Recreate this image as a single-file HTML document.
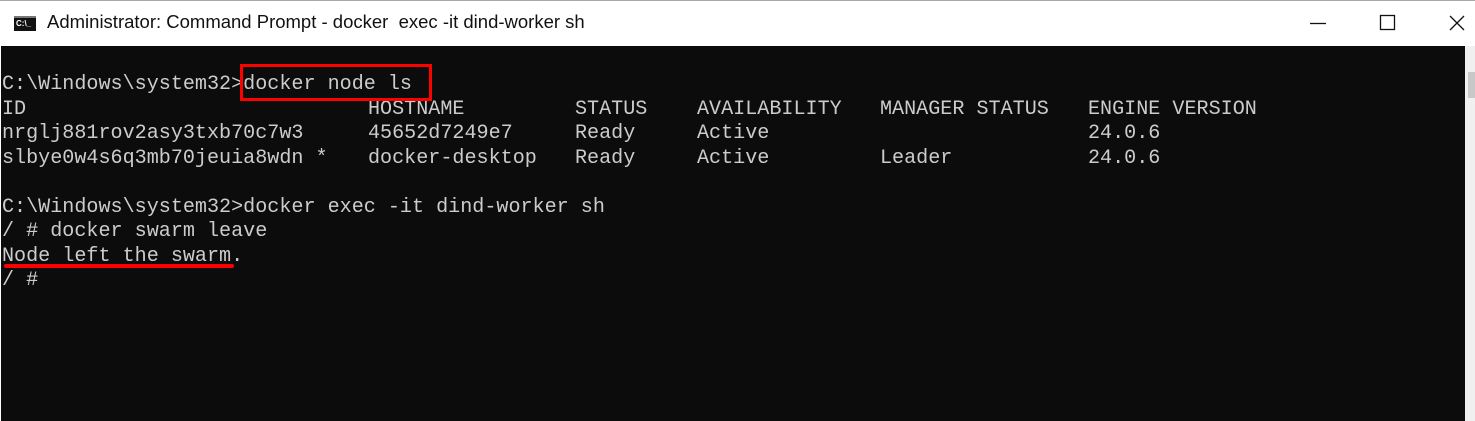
<!DOCTYPE html>
<html><head><meta charset="utf-8"><style>
html,body{margin:0;padding:0;width:1475px;height:421px;overflow:hidden;background:#fff}
.top{position:absolute;left:0;top:0;width:1475px;height:1px;background:#a8a8a8}
.title{position:absolute;left:0;top:1px;width:1475px;height:45px;background:#fff}
.ttext{position:absolute;left:47px;top:10px;font:18.5px "Liberation Sans",sans-serif;color:#111;white-space:pre}
.icon{position:absolute;left:14px;top:15px;width:22px;height:15px;background:#111;border-top:2px solid #777;box-sizing:border-box;color:#fff;font:bold 8px "Liberation Sans",sans-serif;line-height:12px;padding-left:2px}
.term{position:absolute;left:1px;top:46px;width:1464px;height:375px;background:#0c0c0c}
.sb{position:absolute;left:1465px;top:46px;width:10px;height:375px;background:#f0f0f0}
.thumb{position:absolute;left:1468px;top:72px;width:7px;height:26px;background:#c8c8c8}
.t{position:absolute;margin:0;font-family:"Liberation Mono",monospace;font-size:20.1px;line-height:24.55px;color:#cccccc;white-space:pre}
.box{position:absolute;left:240px;top:64px;width:192px;height:37px;border:3px solid #ff0000;box-sizing:border-box}
.ul{position:absolute;left:4px;top:264px;width:230px;height:4px;background:#ff0000;border-radius:2px}
.btn{position:absolute;top:0}
</style></head><body>
<div class="top"></div>
<div class="title">
<div class="icon">C:\_</div>
<div class="ttext">Administrator: Command Prompt - docker  exec -it dind-worker sh</div>
<svg class="btn" style="left:1300px" width="175" height="45"><line x1="10" y1="22.5" x2="26" y2="22.5" stroke="#111" stroke-width="1.3"/><rect x="80.5" y="14.5" width="14" height="14" fill="none" stroke="#111" stroke-width="1.3"/><path d="M150 15 L164 29 M164 15 L150 29" stroke="#111" stroke-width="1.3"/></svg>
</div>
<div class="term"></div>
<div class="sb"></div><div class="thumb"></div>

<div class="t" style="left:2px;top:73px">C:\Windows\system32&gt;docker node ls</div>

<div class="t" style="left:2px;top:97.5px">ID</div>
<div class="t" style="left:368px;top:97.5px">HOSTNAME</div>
<div class="t" style="left:575px;top:97.5px">STATUS</div>
<div class="t" style="left:697px;top:97.5px">AVAILABILITY</div>
<div class="t" style="left:880px;top:97.5px">MANAGER STATUS</div>
<div class="t" style="left:1088px;top:97.5px">ENGINE VERSION</div>

<div class="t" style="left:2px;top:122px">nrglj881rov2asy3txb70c7w3</div>
<div class="t" style="left:368px;top:122px">45652d7249e7</div>
<div class="t" style="left:575px;top:122px">Ready</div>
<div class="t" style="left:697px;top:122px">Active</div>
<div class="t" style="left:1088px;top:122px">24.0.6</div>

<div class="t" style="left:2px;top:146.5px">slbye0w4s6q3mb70jeuia8wdn *</div>
<div class="t" style="left:368px;top:146.5px">docker-desktop</div>
<div class="t" style="left:575px;top:146.5px">Ready</div>
<div class="t" style="left:697px;top:146.5px">Active</div>
<div class="t" style="left:880px;top:146.5px">Leader</div>
<div class="t" style="left:1088px;top:146.5px">24.0.6</div>

<div class="t" style="left:2px;top:195.5px">C:\Windows\system32&gt;docker exec -it dind-worker sh
/ # docker swarm leave
Node left the swarm.
/ #</div>
<div class="box"></div>
<div class="ul"></div>
</body></html>
